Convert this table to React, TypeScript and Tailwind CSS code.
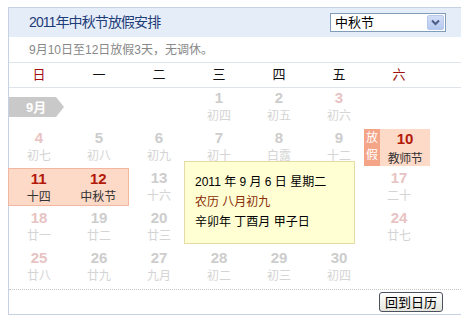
import React from "react";

type Cell = { d?: number; l?: string; we?: boolean };

const FONT = { fontFamily: '"Liberation Sans", Arial, "Noto Sans CJK SC", sans-serif' };

// cells fully covered by the tooltip are left empty (they are hidden in the picture)
const rows: (Cell | "hl1112" | "hl10" | null)[][] = [
  [null, null, null, { d: 1, l: "初四" }, { d: 2, l: "初五" }, { d: 3, l: "初六", we: true }, null],
  [
    { d: 4, l: "初七", we: true },
    { d: 5, l: "初八" },
    { d: 6, l: "初九" },
    { d: 7, l: "初十" },
    { d: 8, l: "白露" },
    { d: 9, l: "十二" },
    "hl10",
  ],
  ["hl1112", { d: 13, l: "十六" }, null, null, null, { d: 17, l: "二十", we: true }],
  [
    { d: 18, l: "廿一", we: true },
    { d: 19, l: "廿二" },
    { d: 20, l: "廿三" },
    null,
    null,
    null,
    { d: 24, l: "廿七", we: true },
  ],
  [
    { d: 25, l: "廿八", we: true },
    { d: 26, l: "廿九" },
    { d: 27, l: "九月" },
    { d: 28, l: "初二" },
    { d: 29, l: "初三" },
    { d: 30, l: "初四" },
    null,
  ],
];

export default function App() {
  const weekdays = ["日", "一", "二", "三", "四", "五", "六"];
  return (
    <div className="pl-[8px] pt-[7px] bg-white" style={FONT}>
      <div className="w-[453px] border-l border-t border-b border-[#c6d2e2]">
        {/* header */}
        <div className="h-[29px] bg-[#e5edf8] flex items-center justify-between pl-[20px] pr-[15px]">
          <div className="text-[14px] tracking-[-0.9px] text-[#1d3c78]">2011年中秋节放假安排</div>
          <div className="w-[116px] h-[19px] border border-[#7f9db9] bg-white flex items-center justify-between pl-[4px] pr-[1px]">
            <span className="text-[13px] text-black leading-none">中秋节</span>
            <div className="w-[17px] h-[15px] rounded-[2px] bg-gradient-to-b from-[#d3def7] to-[#b5c8ee] border border-[#b8c9ec] flex items-center justify-center">
              <svg width="9" height="7" viewBox="0 0 9 7">
                <path d="M1 1.5 L4.5 5 L8 1.5" fill="none" stroke="#4a5d87" strokeWidth="2" />
              </svg>
            </div>
          </div>
        </div>
        {/* subtitle */}
        <div className="h-[26px] flex items-center pl-[20px] text-[12px] text-[#888] border-b border-[#dfe3ea]">
          9月10日至12日放假3天，无调休。
        </div>
        {/* weekdays */}
        <div className="grid grid-cols-[repeat(7,60px)] h-[25px] items-center border-b border-[#dfe3ea] text-[13px]">
          {weekdays.map((w, i) => (
            <div key={w} className={`text-center ${i === 0 || i === 6 ? "text-[#a01010]" : "text-[#111]"}`}>
              {w}
            </div>
          ))}
        </div>
        {/* body */}
        <div className="relative h-[201px]">
          {rows.map((r, ri) => (
            <div key={ri} className="grid grid-cols-[repeat(7,60px)] h-[40px]">
              {r.map((c, ci) => {
                if (c === "hl1112") {
                  return (
                    <div
                      key={ci}
                      className="col-span-2 -ml-px w-[121px] h-[38px] bg-[#fdd9c7] border border-[#f2b79e] flex"
                    >
                      <div className="w-[60px] flex flex-col items-center">
                        <div className="text-[15px] font-bold leading-[20px] text-[#b3190a]">11</div>
                        <div className="text-[12px] leading-[16px] text-[#333]">十四</div>
                      </div>
                      <div className="w-[60px] flex flex-col items-center">
                        <div className="text-[15px] font-bold leading-[20px] text-[#b3190a]">12</div>
                        <div className="text-[12px] leading-[16px] text-[#333]">中秋节</div>
                      </div>
                    </div>
                  );
                }
                if (c === "hl10") {
                  return (
                    <div key={ci} className="-ml-[5px] w-[66px] h-[37px] mt-[1px] bg-[#fdd9c7] flex">
                      <div className="w-[16px] h-full bg-[#f4a487] flex flex-col items-center pt-[1px] text-white text-[12px] leading-[17px]">
                        <span>放</span>
                        <span>假</span>
                      </div>
                      <div className="flex-1 flex flex-col items-center pt-[2px]">
                        <div className="text-[15px] font-bold leading-[16px] text-[#b3190a]">10</div>
                        <div className="text-[12px] leading-[16px] mt-[4px] text-[#333] tracking-[-0.5px]">教师节</div>
                      </div>
                    </div>
                  );
                }
                if (!c) return <div key={ci} />;
                return (
                  <div key={ci} className="flex flex-col items-center">
                    <div
                      className={`text-[15px] font-bold leading-[20px] ${c.we ? "text-[#e8c3c3]" : "text-[#cdcdcd]"}`}
                    >
                      {c.d}
                    </div>
                    <div className="text-[12px] leading-[16px] text-[#d4d4d4]">{c.l}</div>
                  </div>
                );
              })}
            </div>
          ))}
          {/* month tag */}
          <div className="absolute left-0 top-[9px] w-[55px] h-[20px] bg-[#c9c9c9] [clip-path:polygon(0_0,47px_0,55px_50%,47px_100%,0_100%)] flex items-center pl-[17px]">
            <span className="text-white font-bold text-[13px] leading-none">9月</span>
          </div>
          {/* tooltip */}
          <div className="absolute left-[175px] top-[73px] w-[171px] h-[83px] bg-[#ffffd3] border border-[#e3dca6] pl-[10px] pt-[10px] text-[12px] leading-[20px]">
            <div className="text-black">2011 年 9 月 6 日 星期二</div>
            <div className="text-[#8a2c06]">农历 八月初九</div>
            <div className="text-black">辛卯年 丁酉月 甲子日</div>
          </div>
        </div>
        {/* footer */}
        <div className="h-[25px] border-t border-dotted border-[#c8c8c8] flex justify-end items-start pt-[2px] pr-[18px]">
          <button className="w-[64px] h-[20px] rounded-[3px] border border-[#4a5260] bg-gradient-to-b from-white to-[#e4e4dc] text-[13px] text-black leading-none flex items-center justify-center">
            回到日历
          </button>
        </div>
      </div>
    </div>
  );
}
